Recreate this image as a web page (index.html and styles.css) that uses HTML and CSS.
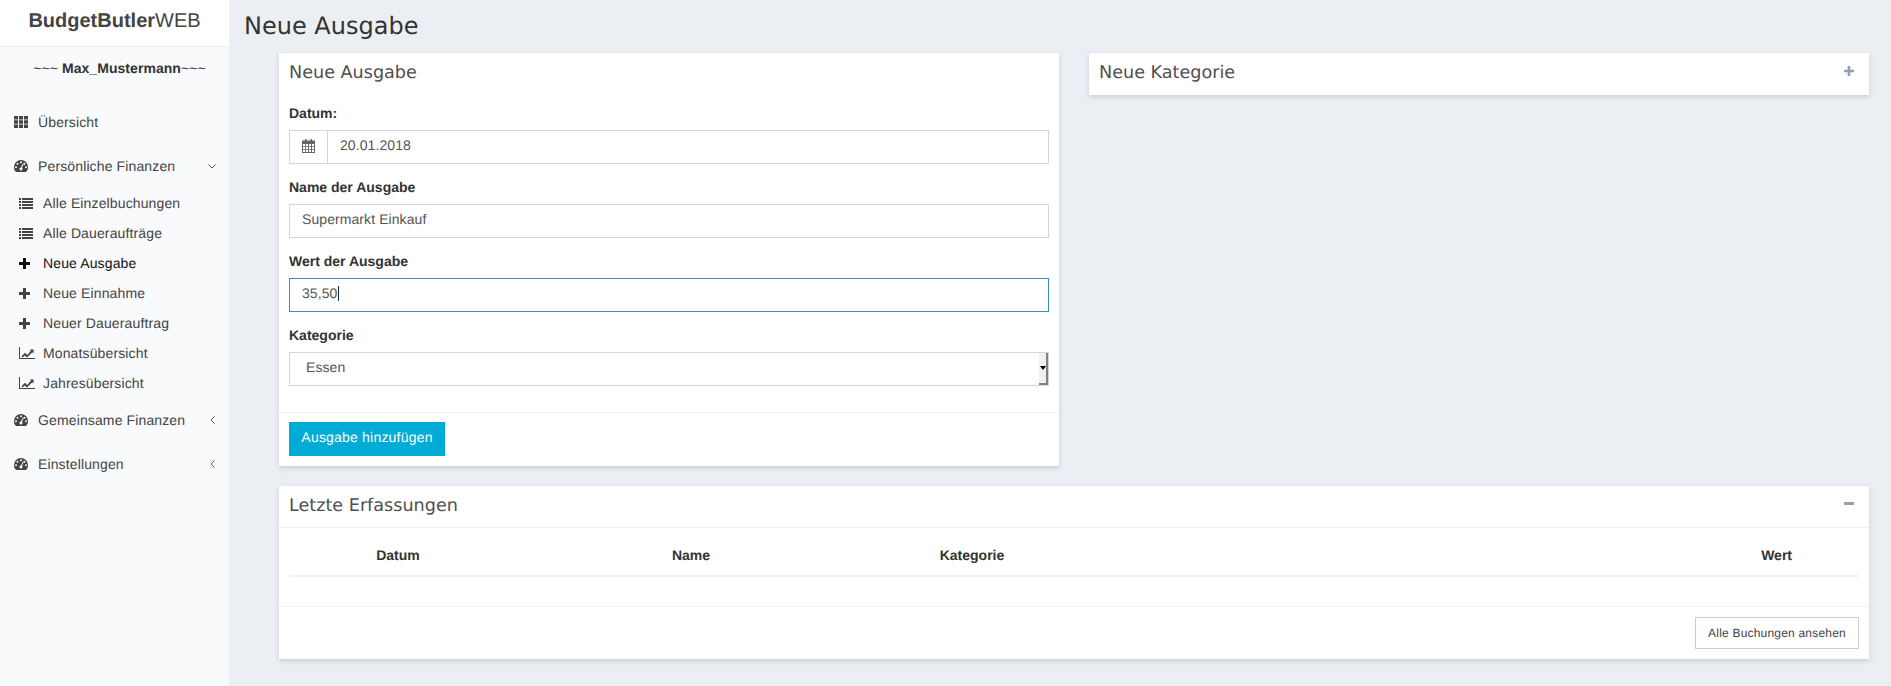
FILE: index.html
```html
<!DOCTYPE html>
<html lang="de">
<head>
<meta charset="utf-8">
<title>BudgetButlerWEB</title>
<link rel="stylesheet" href="styles.css">
</head>
<body>
<svg class="defs" width="0" height="0" aria-hidden="true">
  <symbol id="i-th" viewBox="0 0 14 12"><path d="M0 0h4v3.4H0zM5 0h4v3.4H5zM10 0h4v3.4h-4zM0 4.3h4v3.4H0zM5 4.3h4v3.4H5zM10 4.3h4v3.4h-4zM0 8.6h4V12H0zM5 8.6h4V12H5zM10 8.6h4V12h-4z"/></symbol>
  <symbol id="i-gauge" viewBox="0 0 14 12"><path fill-rule="evenodd" d="M7 0a7 7 0 0 1 7 7c0 1.9-.6 3.6-1.6 4.6a1 1 0 0 1-.8.4H2.4a1 1 0 0 1-.8-.4C.6 10.600 0 8.900 0 7a7 7 0 0 1 7-7zM7 1.300a1 1 0 1 0 0 2 1 1 0 0 0 0-2zM3.500 2.800a1 1 0 1 0 0 2 1 1 0 0 0 0-2zM10.500 2.800a1 1 0 1 0 0 2 1 1 0 0 0 0-2zM2 6.200a1 1 0 1 0 0 2 1 1 0 0 0 0-2zM12 6.200a1 1 0 1 0 0 2 1 1 0 0 0 0-2zM8.900 3.600 7 7.400a1.500 1.500 0 1 0 1 .4l1.700-3.900z"/></symbol>
  <symbol id="i-list" viewBox="0 0 14 11"><path d="M0 0h2v2H0zM3 0h11v2H3zM0 3h2v2H0zM3 3h11v2H3zM0 6h2v2H0zM3 6h11v2H3zM0 9h2v2H0zM3 9h11v2H3z"/></symbol>
  <symbol id="i-plus" viewBox="0 0 11 11"><path d="M4 0h3v4h4v3H7v4H4V7H0V4h4z"/></symbol>
  <symbol id="i-chart" viewBox="0 0 16 12"><path d="M0 0h1v11h15v1H0z"/><path d="M2.500 9.300 6 5.800l2.200 2.100 3.700-4.200-1.300-1.200h4v4l-1.300-1.300-5.300 5.400-2.200-2.200-2.300 2.200z"/></symbol>
  <symbol id="i-cal" viewBox="0 0 13 14"><path fill-rule="evenodd" d="M3 0h1.500v1.500h4V0H10v1.500h3V14H0V1.500h3zM1 5v2h2.200V5zm3 0v2h2.100V5zm3 0v2h2V5zm3 0v2h2V5zM1 7.800V10h2.200V7.800zm3 0V10h2.100V7.800zm3 0V10h2V7.800zm3 0V10h2V7.800zM1 10.800V13h2.200v-2.200zm3 0V13h2.100v-2.200zm3 0V13h2v-2.200zm3 0V13h2v-2.200z"/></symbol>
</svg>
<div class="layout">
  <aside class="sidebar">
    <div class="brand"><b>BudgetButler</b>WEB</div>
    <div class="user">~~~ <b>Max_Mustermann</b>~~~</div>
    <nav class="nav">
      <a class="top"><svg class="ico"><use href="#i-th"/></svg><span>Übersicht</span></a>
      <a class="top"><svg class="ico"><use href="#i-gauge"/></svg><span>Persönliche Finanzen</span><svg class="chev" viewBox="0 0 8 5"><path d="M.5.500 4 4 7.500.500"/></svg></a>
      <div class="sub">
        <a><svg class="ico"><use href="#i-list"/></svg><span>Alle Einzelbuchungen</span></a>
        <a><svg class="ico"><use href="#i-list"/></svg><span>Alle Daueraufträge</span></a>
        <a class="active"><svg class="ico ico-plus"><use href="#i-plus"/></svg><span>Neue Ausgabe</span></a>
        <a><svg class="ico ico-plus"><use href="#i-plus"/></svg><span>Neue Einnahme</span></a>
        <a><svg class="ico ico-plus"><use href="#i-plus"/></svg><span>Neuer Dauerauftrag</span></a>
        <a><svg class="ico ico-chart"><use href="#i-chart"/></svg><span>Monatsübersicht</span></a>
        <a><svg class="ico ico-chart"><use href="#i-chart"/></svg><span>Jahresübersicht</span></a>
      </div>
      <a class="top"><svg class="ico"><use href="#i-gauge"/></svg><span>Gemeinsame Finanzen</span><svg class="chev chev-left" viewBox="0 0 5 8"><path d="M4.500.500 1 4l3.500 3.500"/></svg></a>
      <a class="top"><svg class="ico"><use href="#i-gauge"/></svg><span>Einstellungen</span><svg class="chev chev-left" viewBox="0 0 5 8"><path d="M4.500.500 1 4l3.500 3.500"/></svg></a>
    </nav>
  </aside>
  <main class="main">
    <h1 class="page-title">Neue Ausgabe</h1>
    <div class="columns">
      <section class="panel form-panel">
        <h2 class="panel-title plain">Neue Ausgabe</h2>
        <form class="form">
          <label class="label">Datum:</label>
          <div class="group">
            <span class="addon"><svg class="cal"><use href="#i-cal"/></svg></span>
            <input class="control grouped" value="20.01.2018">
          </div>
          <label class="label">Name der Ausgabe</label>
          <input class="control" value="Supermarkt Einkauf">
          <label class="label">Wert der Ausgabe</label>
          <div class="control focus">35,50<span class="caret"></span></div>
          <label class="label">Kategorie</label>
          <div class="control select"><span>Essen</span><span class="spin"><i></i></span></div>
        </form>
        <div class="panel-foot"><button type="button" class="btn-primary">Ausgabe hinzufügen</button></div>
      </section>
      <section class="panel cat-panel">
        <div class="panel-title plain split"><h2>Neue Kategorie</h2><svg class="tool"><use href="#i-plus"/></svg></div>
      </section>
    </div>
    <section class="panel recent">
      <div class="panel-title split ruled"><h2>Letzte Erfassungen</h2><span class="minus"></span></div>
      <div class="table-wrap">
        <table class="table">
          <thead><tr><th class="c1">Datum</th><th class="c2">Name</th><th class="c3">Kategorie</th><th class="c4">Wert</th></tr></thead>
          <tbody><tr><td colspan="4"></td></tr></tbody>
        </table>
      </div>
      <div class="recent-foot"><button type="button" class="btn-default">Alle Buchungen ansehen</button></div>
    </section>
  </main>
</div>
</body>
</html>
```
FILE: styles.css
```css
* { box-sizing: border-box; }
html, body { margin: 0; height: 100%; }
body { font-family: "Liberation Sans", Arial, sans-serif; font-size: 14px; color: #444; background: #ebeff4; overflow: hidden; text-rendering: geometricPrecision; }
.defs { display: block; height: 0; }
.layout { display: flex; height: 686px; }

.sidebar { width: 229px; flex: none; background: #f9fafc; }
.brand { height: 47px; background: #fff; border-bottom: 1px solid #e9edf3; font-size: 20px; line-height: 42px; text-align: center; color: #444; }
.brand b { font-weight: 700; }
.user { height: 53px; padding: 13px 0 0 10px; line-height: 16px; font-size: 14px; text-align: center; color: #333; letter-spacing: .05px; }
.nav a { display: flex; align-items: center; color: #444; letter-spacing: .13px; }
.nav .top { height: 44px; padding-left: 14px; }
.nav .top span { flex: 1; margin-left: 10px; }
.nav .top .ico { width: 14px; height: 12px; fill: #444; }
.sub a { height: 30px; padding-left: 19px; }
.sub a span { margin-left: 10px; }
.sub .ico { width: 14px; height: 11px; fill: #444; flex: none; }
.sub .ico-plus { width: 11px; height: 11px; margin-right: 3px; }
.sub .ico-chart { width: 16px; height: 12px; margin-right: -2px; }
.sub .active { color: #111; }
.sub .active .ico { fill: #111; }
.chev { width: 8px; height: 5px; margin-right: 13px; fill: none; stroke: #555; stroke-width: 1; }
.chev-left { width: 5px; height: 8px; margin-right: 14px; }

.main { flex: 1; min-width: 0; padding: 0 22px 0 15px; }
.page-title { margin: 0; height: 53px; padding-top: 11px; font-family: "DejaVu Sans", sans-serif; font-size: 24px; line-height: 30px; font-weight: 400; color: #333; }
.columns { display: flex; gap: 30px; margin-left: 35px; align-items: flex-start; }
.panel { background: #fff; box-shadow: 0 2px 5px rgba(60, 70, 100, .2); flex: 1; min-width: 0; }
.panel-title { margin: 0; font-family: "DejaVu Sans", sans-serif; font-size: 17.6px; font-weight: 400; line-height: 22px; color: #4f4f4f; padding: 9px 10px 0; }
.panel-title h2 { margin: 0; font: inherit; }
.split { display: flex; justify-content: space-between; align-items: flex-start; }
.form-panel { height: 413px; }
.cat-panel { height: 42px; }
.form { padding: 19px 10px 0; display: flex; flex-direction: column; }
.label { font-weight: 700; color: #333; line-height: 20px; height: 20px; margin-bottom: 7px; }
.control { display: flex; align-items: center; height: 34px; width: 100%; border: 1px solid #d2d6de; padding: 0 12px 4px; font: 14px "Liberation Sans", Arial, sans-serif; color: #555; background: #fff; margin-bottom: 13px; outline: 0; border-radius: 0; text-rendering: geometricPrecision; letter-spacing: .08px; }
.group { display: flex; height: 34px; margin-bottom: 13px; }
.addon { width: 38px; flex: none; display: flex; align-items: center; justify-content: center; border: 1px solid #d2d6de; border-right: 0; padding-bottom: 2px; }
.cal { width: 13px; height: 14px; fill: #666; }
.grouped { flex: 1; margin: 0; }
.focus { border-color: #3c8dbc; }
.caret { width: 1px; height: 15px; background: #222; margin-left: 1px; }
.select { justify-content: space-between; padding: 0 0 0 16px; margin-bottom: 0; }
.select > span:first-child { padding-bottom: 4px; }
.spin { width: 9px; height: 32px; background: #f0f0f0; border-right: 2px solid #808080; border-bottom: 2px solid #808080; display: flex; align-items: center; justify-content: center; }
.spin i { width: 0; height: 0; border: 3px solid transparent; border-top: 4px solid #000; border-bottom: 0; }
.panel-foot { margin-top: 26px; border-top: 1px solid #f0f0f0; padding: 9px 10px 10px; }
.btn-primary { display: block; height: 34px; width: 156px; border: 0; padding: 0 0 4px; background: #00acd6; color: #fff; font: 14px "Liberation Sans", Arial, sans-serif; text-rendering: geometricPrecision; letter-spacing: .2px; }

.recent { margin: 20px 0 0 35px; height: 173px; }
.ruled { height: 42px; border-bottom: 1px solid #f0f0f0; }
.tool { width: 10px; height: 10px; fill: #97a0b3; margin: 4px 5px 0 0; }
.minus { width: 10px; height: 3px; background: #97a0b3; margin: 7px 5px 0 0; }
.table-wrap { padding: 0 10px; }
.table { width: 100%; border-collapse: collapse; table-layout: fixed; }
.table th { height: 48px; border-bottom: 2px solid #f2f2f2; font-weight: 700; color: #333; text-align: center; padding: 6px 0 0; }
.table td { height: 30px; padding: 0; }
.c1 { width: 218px; } .c2 { width: 368px; } .c3 { width: 194px; }
.table .c4 { text-align: right; padding-right: 67px; }
.recent-foot { border-top: 1px solid #f0f0f0; display: flex; justify-content: flex-end; padding: 10px; }
.btn-default { width: 164px; height: 32px; background: #fff; border: 1px solid #ccc; padding: 0 0 1px; color: #444; font: 12px "Liberation Sans", Arial, sans-serif; text-rendering: geometricPrecision; letter-spacing: .2px; }
```
